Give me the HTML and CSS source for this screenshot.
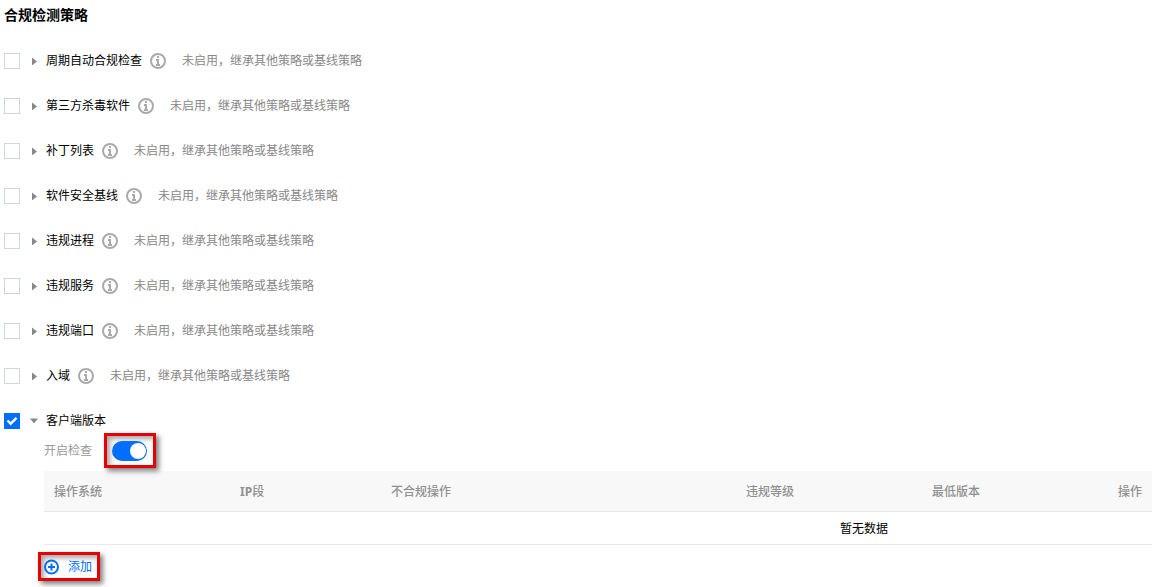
FILE: index.html
```html
<!DOCTYPE html>
<html lang="zh-CN">
<head>
<meta charset="utf-8">
<title>合规检测策略</title>
<link rel="stylesheet" href="styles.css">
</head>

<body>

<svg class="sprite" width="0" height="0" aria-hidden="true">
<symbol id="icon-info" viewBox="0 0 16 16">
<circle cx="8" cy="8" r="7" fill="none" stroke="#aaaaaa" stroke-width="2"/>
<path d="M7,3h2v2h-2zM6,6h3v5h1v2h-4v-2h1v-3h-1z" fill="#aaaaaa"/>
</symbol>
<symbol id="icon-right" viewBox="0 0 8 8">
<path d="M2,0.5l5,4l-5,4z" fill="#888888"/>
</symbol>
<symbol id="icon-down" viewBox="0 0 8 8">
<path d="M0,1.5h8l-4,5z" fill="#888888"/>
</symbol>
</svg>

<h1 class="title">合规检测策略</h1>

<ul class="policies">

<li class="policy">
<input class="check" type="checkbox" id="policy-period">
<svg class="arrow"><use href="#icon-right"/></svg>
<label class="name" for="policy-period">周期自动合规检查</label>
<svg class="info"><use href="#icon-info"/></svg>
<span class="state">未启用，继承其他策略或基线策略</span>
</li>

<li class="policy">
<input class="check" type="checkbox" id="policy-antivirus">
<svg class="arrow"><use href="#icon-right"/></svg>
<label class="name" for="policy-antivirus">第三方杀毒软件</label>
<svg class="info"><use href="#icon-info"/></svg>
<span class="state">未启用，继承其他策略或基线策略</span>
</li>

<li class="policy">
<input class="check" type="checkbox" id="policy-patch">
<svg class="arrow"><use href="#icon-right"/></svg>
<label class="name" for="policy-patch">补丁列表</label>
<svg class="info"><use href="#icon-info"/></svg>
<span class="state">未启用，继承其他策略或基线策略</span>
</li>

<li class="policy">
<input class="check" type="checkbox" id="policy-baseline">
<svg class="arrow"><use href="#icon-right"/></svg>
<label class="name" for="policy-baseline">软件安全基线</label>
<svg class="info"><use href="#icon-info"/></svg>
<span class="state">未启用，继承其他策略或基线策略</span>
</li>

<li class="policy">
<input class="check" type="checkbox" id="policy-process">
<svg class="arrow"><use href="#icon-right"/></svg>
<label class="name" for="policy-process">违规进程</label>
<svg class="info"><use href="#icon-info"/></svg>
<span class="state">未启用，继承其他策略或基线策略</span>
</li>

<li class="policy">
<input class="check" type="checkbox" id="policy-service">
<svg class="arrow"><use href="#icon-right"/></svg>
<label class="name" for="policy-service">违规服务</label>
<svg class="info"><use href="#icon-info"/></svg>
<span class="state">未启用，继承其他策略或基线策略</span>
</li>

<li class="policy">
<input class="check" type="checkbox" id="policy-port">
<svg class="arrow"><use href="#icon-right"/></svg>
<label class="name" for="policy-port">违规端口</label>
<svg class="info"><use href="#icon-info"/></svg>
<span class="state">未启用，继承其他策略或基线策略</span>
</li>

<li class="policy">
<input class="check" type="checkbox" id="policy-domain">
<svg class="arrow"><use href="#icon-right"/></svg>
<label class="name" for="policy-domain">入域</label>
<svg class="info"><use href="#icon-info"/></svg>
<span class="state">未启用，继承其他策略或基线策略</span>
</li>

<li class="policy">
<input class="check" type="checkbox" id="policy-version" checked>
<svg class="arrow"><use href="#icon-down"/></svg>
<label class="name" for="policy-version">客户端版本</label>
</li>

</ul>

<div class="detail">

<div class="switch-row">
<label for="enable-check">开启检查</label>
<div class="highlight">
<input class="switch" type="checkbox" id="enable-check" checked>
</div>
</div>

<div class="table-wrapper">
<table class="versions">
<colgroup>
<col class="col-os">
<col class="col-ip">
<col class="col-action">
<col class="col-level">
<col class="col-version">
<col>
</colgroup>
<thead>
<tr>
<th>操作系统</th>
<th><b>IP</b>段</th>
<th>不合规操作</th>
<th>违规等级</th>
<th>最低版本</th>
<th>操作</th>
</tr>
</thead>
<tbody>
<tr>
<td class="empty" colspan="6">暂无数据</td>
</tr>
</tbody>
</table>
</div>

<div class="highlight highlight-add">
<button class="add" type="button">
<svg width="16" height="16" viewBox="0 0 16 16">
<circle cx="7.5" cy="8" r="6.5" fill="none" stroke="#006eff" stroke-width="2"/>
<path d="M7.5,4.5v7M4,8h7" fill="none" stroke="#006eff" stroke-width="2"/>
</svg>
添加
</button>
</div>

</div>

</body>
</html>
```
FILE: styles.css
```css
body {
  margin: 0;
  padding: 5px 0 6px 4px;
  overflow: hidden;
  background-color: #fff;
  color: #000;
  font-family: "Noto Sans", "Noto Sans CJK SC", sans-serif;
  font-size: 12px;
  line-height: 20px;
}

.sprite {
  position: absolute;
}

.title {
  margin: 0 0 26px;
  font-size: 14px;
  font-weight: bold;
  line-height: 20px;
}

.policies {
  display: flex;
  flex-direction: column;
  gap: 25px;
  margin: 0;
  padding: 0;
  list-style: none;
}

.policy {
  display: flex;
  align-items: center;
  height: 20px;
}

.check {
  appearance: none;
  flex: none;
  width: 16px;
  height: 16px;
  margin: 0;
  border: 1px solid #cfd5de;
  background-color: #fff;
}

.check:checked {
  border-color: #006eff;
  background: #006eff url("data:image/svg+xml,%3Csvg xmlns='http://www.w3.org/2000/svg' viewBox='0 0 14 14'%3E%3Cpath d='M2.5 6.5l3.2 3.2l5.8-5.8' fill='none' stroke='white' stroke-width='2.4'/%3E%3C/svg%3E") center no-repeat;
}

.arrow {
  flex: none;
  width: 8px;
  height: 8px;
  margin: 0 8px 0 10px;
}

.info {
  flex: none;
  width: 16px;
  height: 16px;
  margin: 0 16px 0 8px;
}

.state {
  color: #888;
}

.detail {
  margin-left: 40px;
}

.switch-row {
  display: flex;
  align-items: center;
  gap: 12px;
  margin: 2px 0 3px;
  color: #999;
}

.highlight {
  display: flex;
  padding: 5px 6px 4px 5px;
  border: 3px solid #e60000;
  box-shadow: 3px 3px 5px rgba(0, 0, 0, 0.5), inset 3px 3px 5px rgba(0, 0, 0, 0.35);
}

.switch {
  appearance: none;
  display: flex;
  justify-content: flex-end;
  width: 35px;
  height: 20px;
  margin: 0;
  padding: 2px 1px;
  box-sizing: border-box;
  border-radius: 10px;
  background-color: #006eff;
}

.switch::before {
  content: "";
  width: 16px;
  height: 16px;
  border-radius: 50%;
  background-color: #fff;
}

.table-wrapper {
  overflow: hidden;
}

/* wider than the panel, the last column runs off the right edge */
.versions {
  width: 1640px;
  table-layout: fixed;
  border-collapse: collapse;
}

.col-os, .col-level, .col-version {
  width: 186px;
}

.col-ip {
  width: 151px;
}

.col-action {
  width: 355px;
}

.versions th {
  height: 38px;
  padding: 2px 10px 0;
  border-bottom: 1px solid #e5e5e5;
  background-color: #f8f8f8;
  color: #909090;
  font-weight: 500;
  text-align: left;
}

.versions td {
  height: 30px;
  padding: 2px 0 0;
  border-bottom: 1px solid #e8eaee;
}

.versions .empty {
  text-align: center;
}

.highlight-add {
  width: max-content;
  margin: 7px 0 0 -6px;
  padding: 2px 5px 1px 3px;
}

.add {
  display: flex;
  align-items: center;
  gap: 8px;
  height: 20px;
  margin: 0;
  padding: 0;
  border: 0;
  background: none;
  color: #006eff;
  font: inherit;
  cursor: pointer;
}
```
